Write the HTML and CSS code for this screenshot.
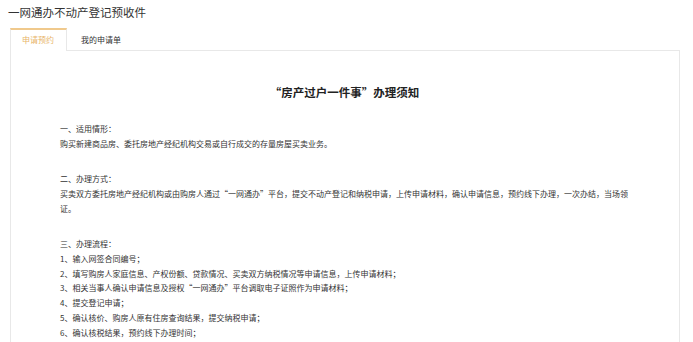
FILE: index.html
```html
<!DOCTYPE html>
<html lang="zh-CN">
<head>
  <meta charset="UTF-8" />
  <meta name="viewport" content="width=device-width, initial-scale=1.0"/>
  <title>一网通办不动产登记预收件</title>
  <link rel="stylesheet" href="styles.css">
</head>
<body>
  <h1 class="page-title">一网通办不动产登记预收件</h1>

  <div class="tabs">
    <div class="tab active">申请预约</div>
    <div class="tab">我的申请单</div>
  </div>

  <div class="panel">
    <h2>“房产过户一件事”办理须知</h2>

    <div class="block">
      <p>一、适用情形：</p>
      <p>购买新建商品房、委托房地产经纪机构交易或自行成交的存量房屋买卖业务。</p>
    </div>

    <div class="block">
      <p>二、办理方式：</p>
      <p>买卖双方委托房地产经纪机构或由购房人通过“一网通办”平台，提交不动产登记和纳税申请，上传申请材料，确认申请信息，预约线下办理，一次办结，当场领<br>证。</p>
    </div>

    <div class="block">
      <p>三、办理流程：</p>
      <p>1、输入网签合同编号；</p>
      <p>2、填写购房人家庭信息、产权份额、贷款情况、买卖双方纳税情况等申请信息，上传申请材料；</p>
      <p>3、相关当事人确认申请信息及授权“一网通办”平台调取电子证照作为申请材料；</p>
      <p>4、提交登记申请；</p>
      <p>5、确认核价、购房人原有住房查询结果，提交纳税申请；</p>
      <p>6、确认核税结果，预约线下办理时间；</p>
    </div>
  </div>
</body>
</html>
```

FILE: styles.css
```css
:root {
  --text: #333333;
  --border: #e8e8e8;
  --accent: #f0c98c;
  --accent-text: #e8b56a;
}

* {
  box-sizing: border-box;
  margin: 0;
  padding: 0;
}

body {
  font-family: "Noto Sans CJK SC", "Noto Sans", sans-serif;
  color: var(--text);
  background: #ffffff;
  padding: 0 13px 0 10px;
  overflow: hidden;
}

.page-title {
  font-size: 11.5px;
  font-weight: normal;
  line-height: 16px;
  padding: 4px 0 0 0;
  margin-left: -2px;
  height: 28px;
}

.tabs {
  display: flex;
  height: 23px;
  position: relative;
  z-index: 1;
}

.tab {
  font-size: 8px;
  line-height: 19px;
  padding: 0 12px 0 11px;
  border: 1px solid transparent;
  border-top-width: 2px;
  border-bottom: none;
  color: var(--text);
}

.tab.active {
  color: var(--accent-text);
  background: #ffffff;
  border-color: var(--border);
  border-top-color: var(--accent);
  height: 23px;
}

.tab + .tab {
  margin-left: 2px;
}

.panel {
  border: 1px solid var(--border);
  margin-top: -1px;
  padding: 33px 50px 40px 49px;
  font-size: 8px;
  line-height: 14.8px;
}

.panel h2 {
  text-align: center;
  font-size: 11.5px;
  line-height: 16px;
  font-weight: bold;
  color: #222222;
  margin-bottom: 22px;
}

.block {
  margin-bottom: 20.5px;
}
```
